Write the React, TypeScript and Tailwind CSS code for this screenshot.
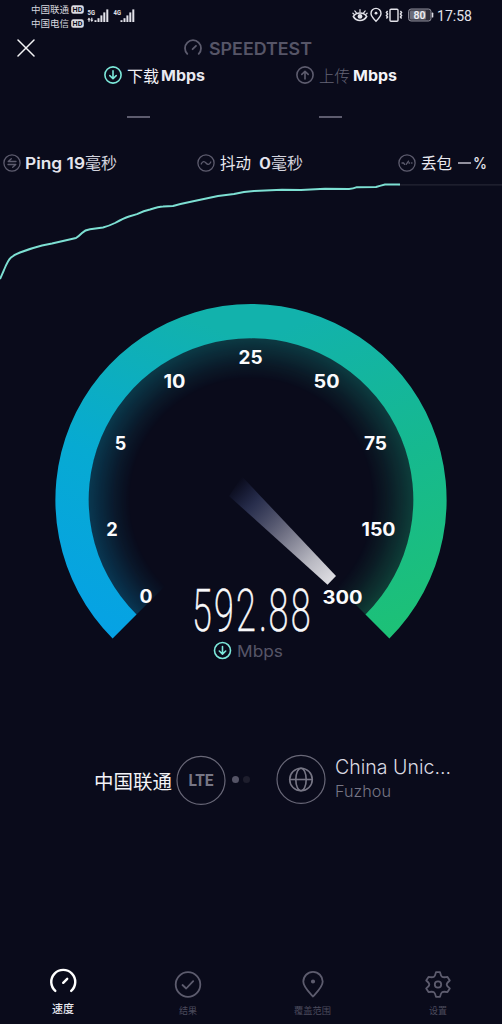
import type { ReactNode } from "react";

const AQUA = "#7ce8da";
const MUTED = "#5d5c6e";

function Word({ w, h, size, weight = 500, fill, base, family = "Inter, 'Noto Sans CJK SC', sans-serif", children }: {
  w: number; h: number; size: number; weight?: number; fill: string; base: number; family?: string; children: string;
}) {
  return (
    <svg width={w} height={h} className="block shrink-0 overflow-visible">
      <text x="0" y={base} fill={fill} fontSize={size} fontWeight={weight} fontFamily={family} textLength={w} lengthAdjust="spacingAndGlyphs">
        {children}
      </text>
    </svg>
  );
}

function Ring({ color, children, width = 1.6 }: { color: string; children: ReactNode; width?: number }) {
  return (
    <svg width="18" height="18" viewBox="0 0 18 18" fill="none" stroke={color} strokeWidth={width} strokeLinecap="round" strokeLinejoin="round" className="shrink-0">
      <circle cx="9" cy="9" r="8.1" />
      {children}
    </svg>
  );
}

function Signal({ label, arrows }: { label: string; arrows?: boolean }) {
  return (
    <svg width="22" height="15" viewBox="0 0 22 15" fill="#e3e3ea" className="shrink-0">
      <text x="0.5" y="6" fontSize="8" fontWeight="700" fontFamily="Roboto, sans-serif" textLength="7.5" lengthAdjust="spacingAndGlyphs">{label}</text>
      {arrows && <path d="M2 8.500.300 10.800h1.100v2h1.200v-2h1zM4.800 13l1.600-2.200h-1v-2H4.200v2h-1z" />}
      <rect x="7.5" y="11.2" width="2" height="1.8" />
      <rect x="10.5" y="9.2" width="2" height="3.8" />
      <rect x="13.4" y="6.4" width="2" height="6.6" />
      <rect x="16.3" y="3.4" width="2" height="9.6" />
      <rect x="19.3" y="0.4" width="2" height="12.6" />
    </svg>
  );
}

function HD() {
  return (
    <svg width="13" height="9" viewBox="0 0 13 9" className="shrink-0">
      <rect x="0.2" y="0.2" width="12.6" height="8.6" rx="2.2" fill="#dcdce4" />
      <text x="1.6" y="7.2" fontSize="7.8" fontWeight="700" fontFamily="Roboto, sans-serif" textLength="9.8" lengthAdjust="spacingAndGlyphs" fill="#0a0b1b">HD</text>
    </svg>
  );
}

function StatusBar() {
  return (
    <div className="flex h-[32px] items-start pl-[31px]">
      <div className="flex flex-col pt-[2px]">
        {["中国联通", "中国电信"].map((n) => (
          <div key={n} className="flex h-[14px] items-center gap-[2px]">
            <Word w={38} h={12} size={9.6} base={9.5} weight={400} fill="#d6d6de">{n}</Word>
            <HD />
          </div>
        ))}
      </div>
      <div className="flex gap-[4px] pl-[3px] pt-[9px]">
        <Signal label="5G" arrows />
        <Signal label="4G" />
      </div>
      <div className="ml-auto flex items-center pr-[30px] pt-[7px]">
        <svg width="16" height="16" viewBox="0 0 16 16" fill="none" stroke="#e3e3ea" strokeWidth="1.5" strokeLinecap="round" className="mr-[1px]">
          <path d="M1.3 9.5C3 6.7 5.2 5.9 8 5.900s5 .800 6.700 3.600c-1.700 2.800-4 4-6.700 4s-5-1.200-6.700-4z" />
          <path d="M8 5V2.600M4.400 5.900 2.800 3.900M11.600 5.900l1.600-2M2.200 7.400.900 6.200M13.800 7.400 15.100 6.200" strokeWidth="1.200" />
          <circle cx="8" cy="9.400" r="2.400" fill="#e3e3ea" stroke="none" />
        </svg>
        <svg width="12" height="16" viewBox="0 0 12 16" fill="none" stroke="#e3e3ea" strokeWidth="1.4" className="ml-px">
          <path d="M6 14.200C3.400 11.600 1 9 1 6.400a5 5 0 0 1 10 0C11 9 8.600 11.600 6 14.200z" />
          <circle cx="6" cy="6.200" r="1.400" fill="#e3e3ea" stroke="none" />
        </svg>
        <svg width="18" height="16" viewBox="0 0 18 16" fill="none" stroke="#e3e3ea" strokeWidth="1.4" className="ml-[3px]">
          <rect x="5" y="2.200" width="8" height="12" rx="1" />
          <path d="M2.600 4 1.400 5.500 2.600 7 1.400 8.500l1.200 1.500-1.200 1.500M15.400 4l1.200 1.500L15.400 7l1.200 1.500-1.200 1.500 1.200 1.500" />
        </svg>
        <svg width="26" height="14" viewBox="0 0 26 14" className="ml-[5px]">
          <rect x="0.600" y="1" width="22.400" height="12" rx="2.500" fill="#2c2c3a" stroke="#8e8e9a" />
          <rect x="2" y="2.400" width="16" height="9.200" rx="1" fill="#6c6c79" />
          <text x="11.500" y="10.700" textAnchor="middle" fontSize="10.500" fontWeight="600" fontFamily="Roboto, sans-serif" fill="#f0f0f4">80</text>
          <rect x="23.800" y="4.600" width="1.500" height="5" rx="0.600" fill="#dcdce4" />
        </svg>
        <div className="ml-[3px]">
          <Word w={35} h={16} size={15.5} base={13.5} weight={400} fill="#e3e3ea" family="Roboto, sans-serif">17:58</Word>
        </div>
      </div>
    </div>
  );
}

function Header() {
  return (
    <div className="flex h-[32px] items-center pl-[17px]">
      <svg width="18" height="18" viewBox="0 0 18 18" stroke="#f3f3f6" strokeWidth="1.500" strokeLinecap="round">
        <path d="M1 1l16 16M17 1L1 17" />
      </svg>
      <svg width="18" height="18" viewBox="0 0 18 18" fill="none" stroke={MUTED} strokeWidth="1.800" strokeLinecap="round" className="ml-[149px]">
        <path d="M3.300 14.800a8 8 0 1 1 11.400 0M8.600 10.200 12 6.800" />
      </svg>
      <div className="ml-[7px]">
        <Word w={103} h={20} size={17} base={16.5} weight={600} fill="#565567">SPEEDTEST</Word>
      </div>
    </div>
  );
}

function Speeds() {
  return (
    <div className="-mt-px flex h-[83px] flex-col">
      <div className="flex h-[24px] items-center pl-[104px]">
        <Ring color={AQUA}><path d="M9 4.800v7.800M5.800 9.600 9 12.700l3.200-3.100" /></Ring>
        <div className="ml-[5px] flex gap-[2px]">
          <Word w={32} h={20} size={16} base={16.5} weight={400} fill="#f1f1f5">下载</Word>
          <Word w={44} h={20} size={15} base={16} weight={700} fill="#e9e9f0">Mbps</Word>
        </div>
        <div className="ml-[91px] flex">
          <Ring color={MUTED}><path d="M9 13V5.300M5.800 8.400 9 5.300l3.200 3.100" /></Ring>
        </div>
        <div className="ml-[5px] flex gap-[3px]">
          <Word w={31} h={20} size={16} base={16.5} weight={300} fill="#666577">上传</Word>
          <Word w={44} h={20} size={15} base={16} weight={700} fill="#f4f4f8">Mbps</Word>
        </div>
      </div>
      <div className="flex gap-[169px] pl-[127px] pt-[29px]">
        <div className="h-[2px] w-[23px] bg-[#5d5c6e]" />
        <div className="h-[2px] w-[23px] bg-[#5d5c6e]" />
      </div>
    </div>
  );
}

function Metrics() {
  return (
    <div className="flex h-[34px] items-center pl-[3px]">
      <Ring color={MUTED} width={1.3}><path d="M13 7.500H5.200L8.300 4.700M5 10.500h7.800l-3.100 2.800" /></Ring>
      <div className="ml-[4px] flex">
        <Word w={60} h={22} size={15.5} base={16.7} weight={600} fill="#e5e5ed">Ping 19</Word>
        <Word w={32} h={22} size={16} base={17} weight={400} fill="#d3d3dd">毫秒</Word>
      </div>
      <div className="ml-[80px] flex">
        <Ring color={MUTED} width={1.3}><path d="M4.200 10c1.500-3.200 3.300-2.800 4.800-1s3.300 2 4.800-1" /></Ring>
      </div>
      <div className="ml-[5px] flex">
        <Word w={31} h={22} size={16} base={17} weight={400} fill="#e9e9f0">抖动</Word>
        <div className="ml-[8px] flex">
          <Word w={12} h={22} size={15.5} base={16.7} weight={600} fill="#e5e5ed">0</Word>
          <Word w={32} h={22} size={16} base={17} weight={400} fill="#d3d3dd">毫秒</Word>
        </div>
      </div>
      <div className="ml-[95px] flex">
        <Ring color={MUTED} width={1.3}><path d="M4 9h1.600l1 1.400M8.200 10.300l2.300-3.200M11 9h.600M13.600 9h.400" /></Ring>
      </div>
      <div className="ml-[5px] flex items-center">
        <Word w={31} h={22} size={16} base={17} weight={400} fill="#e9e9f0">丢包</Word>
        <div className="ml-[6px] h-[2px] w-[13px] bg-[#92919f]" />
        <div className="ml-[2px]">
          <Word w={14} h={22} size={15.5} base={16.7} weight={500} fill="#e5e5ed">%</Word>
        </div>
      </div>
    </div>
  );
}

function Trend() {
  return (
    <svg width="502" height="104" viewBox="0 180 502 104" fill="none" className="block">
      <path d="M398 184.800H502" stroke="#252634" strokeWidth="1.300" />
      <path
        d="M0 279L4 270Q8 260 11 257.500Q14 255 20 252.500Q32 248 42 245.500L52 243.500L76 238Q79 236 82 233Q85 230 90 229.300L103 227.500Q110 225.500 115 223Q124 218 129 216.500L137 214.200Q144 210.800 150 209.500Q159 206.600 163 206.500L173 206Q182 203.500 192 201.500L218 196L234 194Q244 191.500 254 191L282 189.800L301 190L325 188.800L349 189Q353 188.900 357 187.200L376 187Q381 185.500 385 184.500H400"
        stroke="#7de0d3" strokeWidth="1.900" strokeLinejoin="round" />
    </svg>
  );
}

const LEFT_BAND = "M112.600 638.400A196 196 0 0 1 251.500 304V338.300A161.500 161.500 0 0 0 136.500 614.500Z";
const RIGHT_BAND = "M389.400 638.400A196 196 0 0 0 250.700 304V338.300A161.500 161.500 0 0 1 365.500 614.500Z";
const MARKS: [string, number, number, number][] = [
  ["0", 146, 603, 13], ["2", 112, 535.5, 11.5], ["5", 120.5, 450, 11.5], ["10", 174.5, 387.5, 22],
  ["25", 250.5, 363.5, 24], ["50", 326.5, 388, 26], ["75", 375.5, 450, 23],
  ["150", 378.5, 535.5, 34], ["300", 342.5, 603.5, 40],
];
const READOUT = "592.88";
const READOUT_X = [-1.5, 35, 71.5, 110, 126, 163];

function Gauge() {
  return (
    <svg width="502" height="386" viewBox="0 284 502 386" className="block">
      <defs>
        <linearGradient id="bandL" gradientUnits="userSpaceOnUse" x1="110" y1="638" x2="251" y2="304">
          <stop offset="0" stopColor="#06a2e5" /><stop offset="0.450" stopColor="#07aad2" /><stop offset="0.900" stopColor="#12b2ac" />
        </linearGradient>
        <linearGradient id="bandR" gradientUnits="userSpaceOnUse" x1="251" y1="304" x2="392" y2="638">
          <stop offset="0.100" stopColor="#12b2ac" /><stop offset="0.550" stopColor="#16b98f" /><stop offset="1" stopColor="#1dc176" />
        </linearGradient>
        <radialGradient id="fade" gradientUnits="userSpaceOnUse" cx="251" cy="500" r="163">
          <stop offset="0.740" stopColor="#fff" stopOpacity="0" /><stop offset="0.830" stopColor="#fff" stopOpacity="0.080" />
          <stop offset="0.920" stopColor="#fff" stopOpacity="0.190" /><stop offset="1" stopColor="#fff" stopOpacity="0.290" />
        </radialGradient>
        <mask id="glow" maskUnits="userSpaceOnUse" x="80" y="330" width="342" height="300">
          <circle cx="251" cy="500" r="163" fill="url(#fade)" />
        </mask>
        <linearGradient id="needle" gradientUnits="userSpaceOnUse" x1="234" y1="485" x2="331" y2="581">
          <stop offset="0" stopColor="#29335e" stopOpacity="0" /><stop offset="0.200" stopColor="#303759" stopOpacity="0.800" />
          <stop offset="0.500" stopColor="#6c6d81" /><stop offset="0.800" stopColor="#b9b9c2" /><stop offset="1" stopColor="#dedde2" />
        </linearGradient>
      </defs>
      <g mask="url(#glow)">
        <path d="M136 615A162.500 162.500 0 0 1 251.300 337.500V500Z" fill="url(#bandL)" />
        <path d="M366 615A162.500 162.500 0 0 0 251 337.500V500Z" fill="url(#bandR)" />
      </g>
      <path d={LEFT_BAND} fill="url(#bandL)" />
      <path d={RIGHT_BAND} fill="url(#bandR)" />
      <path d="M242 476.500 336 576 327.500 584.700 229 496Z" fill="url(#needle)" />
      {MARKS.map(([t, x, y, w]) => (
        <text key={t} x={x - w / 2} y={y} textLength={w} lengthAdjust="spacingAndGlyphs" fontFamily="Inter, sans-serif" fontSize="18.500" fontWeight="700" fill="#fbfbfd">{t}</text>
      ))}
      <text x={READOUT_X.join(" ")} y="0" transform="translate(193 631) scale(0.600 1)" fontFamily="Roboto, sans-serif" fontSize="60" fontWeight="200" fill="#fafafc" stroke="#fafafc" strokeWidth="0.600">{READOUT}</text>
      <g fill="none" stroke={AQUA} strokeWidth="1.600" strokeLinecap="round" strokeLinejoin="round">
        <circle cx="222.500" cy="650.500" r="8" />
        <path d="M222.500 646.500v7.500M219.300 651l3.200 3.100 3.200-3.100" />
      </g>
      <text x="237" y="656.500" textLength="46" lengthAdjust="spacingAndGlyphs" fontFamily="Inter, sans-serif" fontSize="16.500" fontWeight="400" fill="#565567">Mbps</text>
    </svg>
  );
}

function Connection() {
  return (
    <div className="flex h-[220px] items-start pl-[94px] pt-[84px]">
      <div className="pt-[14px]">
        <Word w={78} h={26} size={19.5} base={20.5} weight={400} fill="#f3f3f7">中国联通</Word>
      </div>
      <svg width="50" height="50" viewBox="0 0 50 50" fill="none" className="ml-[4px] mt-[1px]">
        <circle cx="25" cy="25.400" r="24" stroke="#686777" strokeWidth="1.200" />
        <text x="12.500" y="31" textLength="25" lengthAdjust="spacingAndGlyphs" fontSize="17" fontWeight="700" fontFamily="Roboto, sans-serif" fill="#777685">LTE</text>
      </svg>
      <div className="ml-[6px] flex gap-[4px] pt-[22px]">
        <div className="size-[7px] rounded-full bg-[#555466]" />
        <div className="size-[7px] rounded-full bg-[#1e1e2d]" />
      </div>
      <svg width="50" height="50" viewBox="0 0 50 50" fill="none" stroke="#777685" strokeWidth="1.600" className="ml-[26px]">
        <circle cx="25" cy="25.400" r="24" stroke="#686777" strokeWidth="1.200" />
        <circle cx="25" cy="25.500" r="11.300" />
        <ellipse cx="25" cy="25.500" rx="5.200" ry="11.300" />
        <path d="M13.700 25.500h22.600" />
      </svg>
      <div className="ml-[9px]">
        <Word w={116} h={27} size={20} base={20} weight={300} fill="#dadae2">China Unic...</Word>
        <Word w={56} h={20} size={15.5} base={16} weight={300} fill="#777685">Fuzhou</Word>
      </div>
    </div>
  );
}

function Tab({ label, w, active, children }: { label: string; w: number; active?: boolean; children: ReactNode }) {
  return (
    <div className="flex w-[125px] flex-col items-center">
      <svg width="28" height="28" viewBox="0 0 28 28" fill="none" stroke={active ? "#fff" : "#5d5c6e"} strokeWidth={active ? 2.4 : 1.8} strokeLinecap="round" strokeLinejoin="round" className="overflow-visible">
        {children}
      </svg>
      <div className={active ? "mt-[4px]" : "mt-[6px]"}>
        <Word w={w} h={14} size={active ? 11 : 9.5} base={active ? 11 : 10} weight={active ? 500 : 400} fill={active ? "#e8e8ee" : "#4b4a5b"}>{label}</Word>
      </div>
    </div>
  );
}

function TabBar() {
  return (
    <div className="flex pt-[80px]">
      <Tab label="速度" w={22} active><path d="M6.300 20.900a12 12 0 1 1 15.900 0M14.200 12.800l4-4" /></Tab>
      <Tab label="结果" w={18}><circle cx="14" cy="14.500" r="12.300" /><path d="M8.500 15l3.700 3.500 7-7.400" /></Tab>
      <Tab label="覆盖范围" w={37}>
        <path d="M14 26.500C9.500 21.500 4.300 17 4.300 11.600a9.700 9.700 0 0 1 19.400 0C23.700 17 18.500 21.500 14 26.500z" />
        <circle cx="14" cy="11.500" r="1.200" fill="#5d5c6e" />
      </Tab>
      <Tab label="设置" w={18}>
        <path d="M12 2.200h4q1 3.900 2 4.500 1.500 1 5.500.200l2.300 3.600Q22.700 13 22.700 14.500T25.800 18.500l-2.300 3.600q-4-.800-5.500.200-1 .600-2 4.500h-4q-1-3.900-2-4.500-1.500-1-5.500-.200L2.200 18.500Q5.300 16 5.300 14.500T2.200 10.500L4.500 6.900q4 .800 5.500-.200 1-.600 2-4.500z" />
        <circle cx="14" cy="14.500" r="3.200" />
      </Tab>
    </div>
  );
}

export default function App() {
  return (
    <div className="h-[1024px] w-[502px] overflow-hidden bg-[#0a0b1b]">
      <StatusBar />
      <Header />
      <Speeds />
      <Metrics />
      <Trend />
      <Gauge />
      <Connection />
      <TabBar />
    </div>
  );
}
